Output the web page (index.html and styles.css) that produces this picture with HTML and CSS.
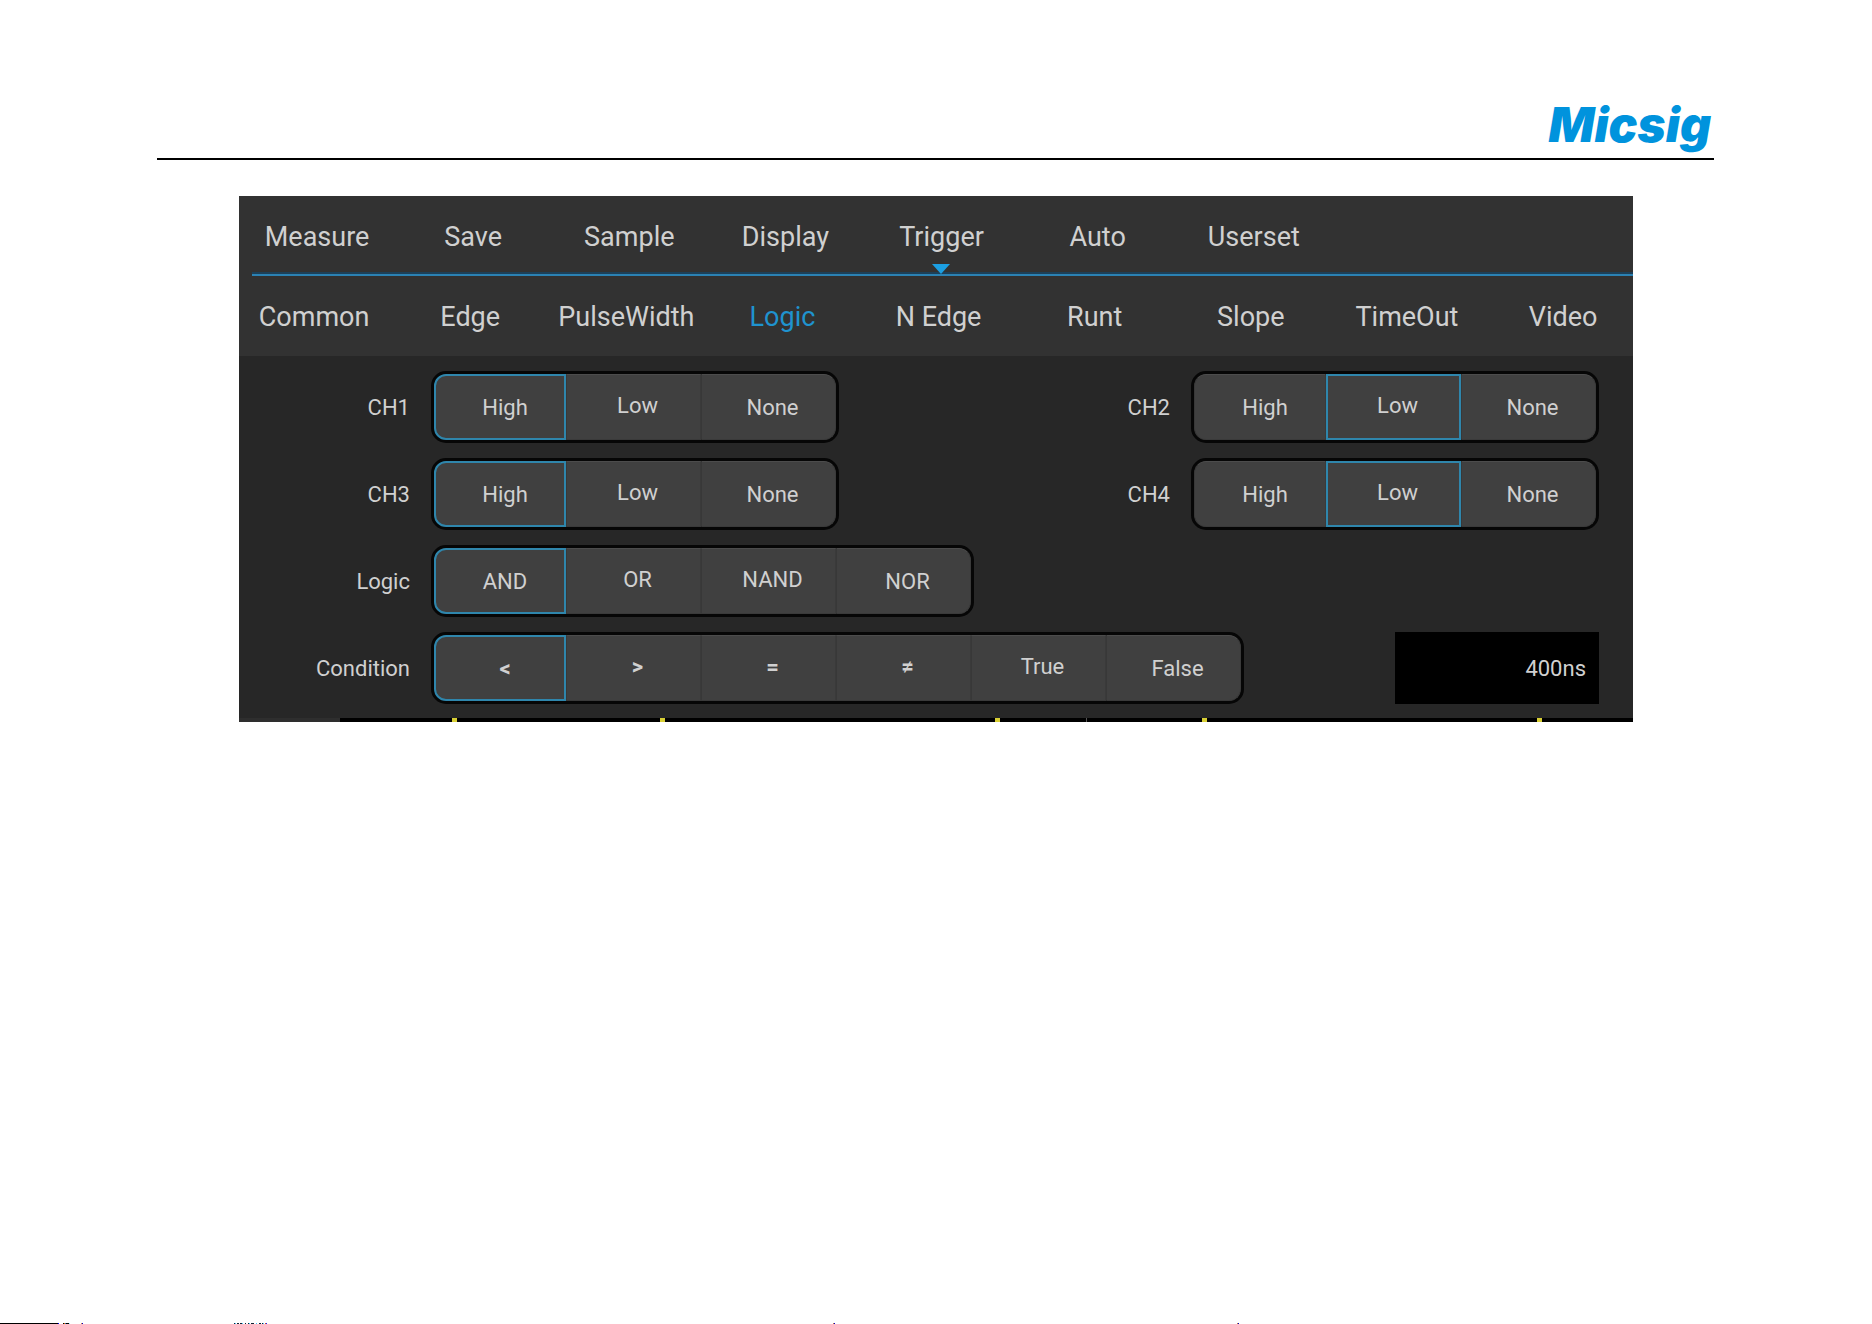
FILE: index.html
```html
<!DOCTYPE html>
<html lang="en">
<head>
    <meta charset="UTF-8">
    <meta name="viewport" content="width=device-width, initial-scale=1.0">
    <title>Micsig - Logic Trigger</title>
    <link rel="stylesheet" href="styles.css">
</head>
<body>
    <header class="page-header">
        <span class="logo">Micsig</span>
    </header>

    <main class="panel">
        <div class="menus">
            <nav class="menu main-menu" aria-label="Main menu">
                <a href="#">Measure</a>
                <a href="#">Save</a>
                <a href="#">Sample</a>
                <a href="#">Display</a>
                <a href="#" class="open">Trigger</a>
                <a href="#">Auto</a>
                <a href="#">Userset</a>
            </nav>
            <div class="menu-line"></div>
            <nav class="menu sub-menu" aria-label="Trigger type">
                <a href="#">Common</a>
                <a href="#">Edge</a>
                <a href="#">PulseWidth</a>
                <a href="#" class="active">Logic</a>
                <a href="#">N Edge</a>
                <a href="#">Runt</a>
                <a href="#">Slope</a>
                <a href="#">TimeOut</a>
                <a href="#">Video</a>
            </nav>
        </div>

        <div class="settings">
            <div class="row">
                <div class="field">
                    <span class="label" id="ch1">CH1</span>
                    <div class="segments" role="group" aria-labelledby="ch1">
                        <button type="button" class="selected">High</button>
                        <button type="button">Low</button>
                        <button type="button">None</button>
                    </div>
                </div>
                <div class="field">
                    <span class="label" id="ch2">CH2</span>
                    <div class="segments" role="group" aria-labelledby="ch2">
                        <button type="button">High</button>
                        <button type="button" class="selected">Low</button>
                        <button type="button">None</button>
                    </div>
                </div>
            </div>
            <div class="row">
                <div class="field">
                    <span class="label" id="ch3">CH3</span>
                    <div class="segments" role="group" aria-labelledby="ch3">
                        <button type="button" class="selected">High</button>
                        <button type="button">Low</button>
                        <button type="button">None</button>
                    </div>
                </div>
                <div class="field">
                    <span class="label" id="ch4">CH4</span>
                    <div class="segments" role="group" aria-labelledby="ch4">
                        <button type="button">High</button>
                        <button type="button" class="selected">Low</button>
                        <button type="button">None</button>
                    </div>
                </div>
            </div>
            <div class="row">
                <div class="field">
                    <span class="label" id="logic">Logic</span>
                    <div class="segments" role="group" aria-labelledby="logic">
                        <button type="button" class="selected">AND</button>
                        <button type="button">OR</button>
                        <button type="button">NAND</button>
                        <button type="button">NOR</button>
                    </div>
                </div>
            </div>
            <div class="row">
                <div class="field">
                    <span class="label" id="condition">Condition</span>
                    <div class="segments" role="group" aria-labelledby="condition">
                        <button type="button" class="symbol selected">&lt;</button>
                        <button type="button" class="symbol">&gt;</button>
                        <button type="button" class="symbol">=</button>
                        <button type="button" class="symbol">≠</button>
                        <button type="button">True</button>
                        <button type="button">False</button>
                    </div>
                </div>
                <input class="time" type="text" value="400ns" aria-label="Time">
            </div>
        </div>

        <!-- top edge of the waveform area -->
        <svg class="wave-edge" viewBox="0 0 1394 4" preserveAspectRatio="none" aria-hidden="true">
            <rect width="1394" height="4" fill="#000"/>
            <rect width="101" height="4" fill="#2e2e2e"/>
            <g fill="#d8cf35">
                <rect x="213" width="5" height="4"/>
                <rect x="421" width="5" height="4"/>
                <rect x="756" width="5" height="4"/>
                <rect x="963" width="5" height="4"/>
                <rect x="1298" width="5" height="4"/>
            </g>
            <rect x="847" width="1" height="4" fill="#555"/>
        </svg>
    </main>

    <footer class="page-edge">
        <svg viewBox="0 0 1872 1" preserveAspectRatio="none" aria-hidden="true">
            <rect width="58" height="1" fill="#000"/>
            <rect x="58" width="1" height="1" fill="#00f"/>
            <rect x="63" width="1" height="1" fill="#000"/>
            <rect x="64" width="1" height="1" fill="#d60"/>
            <rect x="65" width="1" height="1" fill="#27a"/>
            <rect x="66" width="3" height="1" fill="#000"/>
            <rect x="69" width="1" height="1" fill="#9ef"/>
            <rect x="81" width="1" height="1" fill="#c84"/>
            <rect x="82" width="1" height="1" fill="#00c"/>
            <path d="M234 .5h30" stroke="#123" stroke-dasharray="1 2 2 1 3 2"/>
            <path d="M235 .5h30" stroke="#4cf" stroke-dasharray="1 6"/>
            <rect x="265" width="1" height="1" fill="#c53"/>
            <rect x="266" width="1" height="1" fill="#22f"/>
            <rect x="833" width="1" height="1" fill="#b74"/>
            <rect x="834" width="1" height="1" fill="#00c"/>
            <rect x="1237" width="1" height="1" fill="#b74"/>
            <rect x="1238" width="1" height="1" fill="#00c"/>
        </svg>
    </footer>
</body>
</html>
```

FILE: styles.css
```css
* {
    box-sizing: border-box;
}

body {
    margin: 0;
    min-height: 100vh;
    display: flex;
    flex-direction: column;
    background-color: #fff;
    font-family: Roboto, Arial, sans-serif;
    color: #d0d0d0;
}

.page-header {
    display: flex;
    justify-content: flex-end;
    margin: 0 158px 0 157px;
    padding: 93px 3px 1px 0;
    border-bottom: 2px solid #000;
}

.logo {
    font-family: Inter, Roboto, sans-serif;
    font-size: 48px;
    line-height: 64px;
    font-weight: 900;
    font-style: italic;
    color: #0093dd;
}

.panel {
    margin: 36px 239px 0;
    background-color: #272727;
    overflow: hidden;
}

/* Menus */
.menus {
    background-color: #323232;
}

.menu {
    display: grid;
    grid-template-columns: repeat(9, 11.2%);
}

.menu a {
    position: relative;
    padding-top: 4px;
    font-size: 27px;
    line-height: 74px;
    text-align: center;
    white-space: nowrap;
    color: inherit;
    text-decoration: none;
}

.menu .open::after {
    content: '';
    position: absolute;
    left: 50%;
    bottom: 0;
    margin-left: -10px;
    border: 9px solid transparent;
    border-top: 10px solid #1c9fe2;
    border-bottom: 0;
}

.menu-line {
    height: 2px;
    margin-left: 13px;
    background-color: #2b82b4;
    box-shadow: 0 -2px #1d4058;
}

.sub-menu {
    margin: 0 3px 0 -3px;
    padding-bottom: 2px;
}

.menu .active {
    color: #1f93cf;
}

/* Settings */
.settings {
    display: flex;
    flex-direction: column;
    gap: 15px;
    padding: 15px 34px 14px 0;
    font-size: 22px;
}

.row {
    display: flex;
    justify-content: space-between;
}

.field {
    display: flex;
    align-items: center;
    gap: 21px;
}

.label {
    width: 171px;
    text-align: right;
}

.segments {
    display: flex;
    height: 72px;
    border: 3px solid #060606;
    border-radius: 15px;
    background-color: #060606;
}

.segments button {
    width: 135px;
    padding: 0 0 4px 8px;
    border: 1px solid #3a3a3a;
    border-top-color: #4c4c4c;
    border-left-color: #383838;
    background-color: #404040;
    font: inherit;
    color: inherit;
    cursor: pointer;
}

.segments button:first-child {
    width: 132px;
    padding: 0 0 0 10px;
    border-radius: 12px 0 0 12px;
}

.segments button:last-child {
    padding: 0 0 0 8px;
    border-radius: 0 12px 12px 0;
}

.segments .symbol {
    font-weight: 700;
}

.segments .selected {
    border: 2px solid #2f86ac;
}

.time {
    width: 204px;
    height: 72px;
    padding: 0 13px;
    border: 0;
    background-color: #000;
    font: inherit;
    color: inherit;
    text-align: right;
}

.wave-edge {
    display: block;
    width: 100%;
    height: 4px;
}

.page-edge {
    margin-top: auto;
}

.page-edge svg {
    display: block;
    width: 100%;
    height: 1px;
}
```
